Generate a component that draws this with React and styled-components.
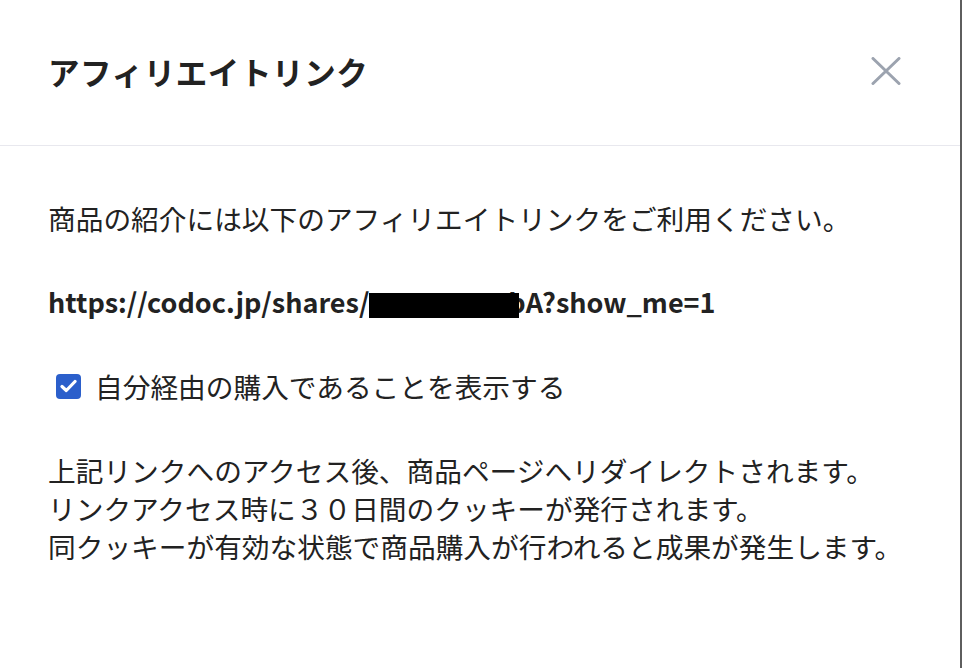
import React from "react";
import styled, { createGlobalStyle } from "styled-components";

const Global = createGlobalStyle`
  html, body { margin: 0; padding: 0; background: #fff; }
  body { font-family: "Noto Sans CJK JP", "Noto Sans", sans-serif; color: #222; }
  * { box-sizing: border-box; }
`;

const Modal = styled.div`
  width: 962px;
  height: 668px;
  background: #fff;
  border-right: 2px solid #5e5e5e;
  display: flex;
  flex-direction: column;
`;

const Header = styled.header`
  height: 146px;
  flex: none;
  display: flex;
  align-items: center;
  justify-content: space-between;
  padding: 0 58px 0 48px;
  border-bottom: 1px solid #e8e8ee;
`;

const Title = styled.h2`
  margin: 0;
  font-size: 31.5px;
  font-weight: 700;
  letter-spacing: 0.6px;
  color: #222;
  line-height: 1;
  padding-bottom: 2px;
`;

const CloseButton = styled.button`
  border: 0;
  background: none;
  padding: 0;
  width: 32px;
  height: 32px;
  display: flex;
  align-items: center;
  justify-content: center;
  cursor: pointer;
  color: #9ca3af;
  margin-bottom: 4px;
`;

const Body = styled.div`
  padding: 53px 48px 0 48px;
  display: flex;
  flex-direction: column;
  gap: 46px;
`;

const Text = styled.p`
  margin: 0;
  font-size: 27.7px;
  line-height: 38px;
  color: #222;
`;

const Url = styled.p`
  margin: 0;
  font-size: 27px;
  line-height: 38px;
  font-weight: 700;
  color: #222;
  white-space: nowrap;
`;

const Redact = styled.span`
  display: inline-block;
  position: relative;
  z-index: 1;
  width: 150px;
  height: 25px;
  background: #000;
  vertical-align: -5px;
  margin-right: -11px;
`;

const CheckRow = styled.label`
  display: flex;
  align-items: center;
  gap: 14px;
  padding-left: 8px;
  font-size: 27.7px;
  line-height: 38px;
  color: #222;
`;

const Box = styled.span`
  width: 25px;
  height: 25px;
  border-radius: 4px;
  background: #2b5fcb;
  display: flex;
  align-items: center;
  justify-content: center;
  flex: none;
`;

const Notes = styled.div`
  display: flex;
  flex-direction: column;
`;

export default function App() {
  return (
    <>
      <Global />
      <Modal>
        <Header>
          <Title>アフィリエイトリンク</Title>
          <CloseButton aria-label="close">
            <svg width="30" height="28" viewBox="0 0 30 28" fill="none">
              <path d="M2 1.5 L28 26.5 M28 1.5 L2 26.5" stroke="currentColor" strokeWidth="3" strokeLinecap="round" />
            </svg>
          </CloseButton>
        </Header>
        <Body>
          <Text>商品の紹介には以下のアフィリエイトリンクをご利用ください。</Text>
          <Url>
            https://codoc.jp/shares/<Redact />bA?show_me=1
          </Url>
          <CheckRow>
            <Box>
              <svg width="17" height="14" viewBox="0 0 17 14" fill="none">
                <path d="M2 7.5 L6.3 11.5 L15 2.5" stroke="#fff" strokeWidth="3.2" strokeLinecap="round" strokeLinejoin="round" />
              </svg>
            </Box>
            自分経由の購入であることを表示する
          </CheckRow>
          <Notes>
            <Text>上記リンクへのアクセス後、商品ページへリダイレクトされます。</Text>
            <Text>リンクアクセス時に３０日間のクッキーが発行されます。</Text>
            <Text>同クッキーが有効な状態で商品購入が行われると成果が発生します。</Text>
          </Notes>
        </Body>
      </Modal>
    </>
  );
}
